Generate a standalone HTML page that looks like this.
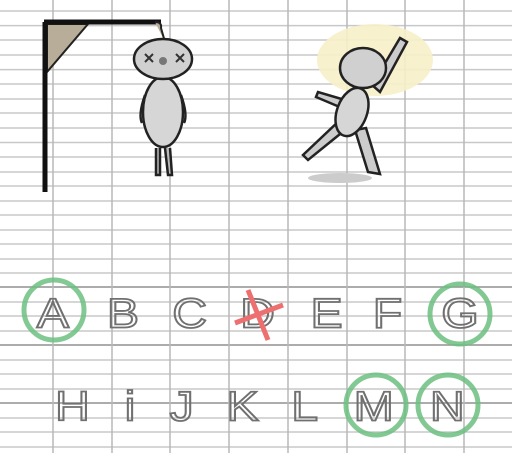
<!DOCTYPE html>
<html><head><style>
html,body{margin:0;padding:0;background:#fff;width:512px;height:453px;overflow:hidden}
svg{display:block}
text{font-family:"Liberation Sans",sans-serif;font-size:42px;fill:none;stroke:#707070;stroke-width:1.8;text-anchor:middle;dominant-baseline:central}
</style></head><body>
<svg width="512" height="453" viewBox="0 0 512 453">
<g stroke="#c8c8c8" stroke-width="1.5">
<line x1="0" y1="11" x2="512" y2="11"/><line x1="0" y1="25.6" x2="512" y2="25.6"/><line x1="0" y1="40" x2="512" y2="40"/><line x1="0" y1="55" x2="512" y2="55"/><line x1="0" y1="69.6" x2="512" y2="69.6"/><line x1="0" y1="84" x2="512" y2="84"/><line x1="0" y1="99" x2="512" y2="99"/><line x1="0" y1="113" x2="512" y2="113"/><line x1="0" y1="128" x2="512" y2="128"/><line x1="0" y1="142.5" x2="512" y2="142.5"/><line x1="0" y1="157" x2="512" y2="157"/><line x1="0" y1="172" x2="512" y2="172"/><line x1="0" y1="186" x2="512" y2="186"/><line x1="0" y1="201" x2="512" y2="201"/><line x1="0" y1="215" x2="512" y2="215"/><line x1="0" y1="230" x2="512" y2="230"/><line x1="0" y1="244" x2="512" y2="244"/><line x1="0" y1="259" x2="512" y2="259"/><line x1="0" y1="273" x2="512" y2="273"/><line x1="0" y1="287" x2="512" y2="287"/><line x1="0" y1="302" x2="512" y2="302"/><line x1="0" y1="316" x2="512" y2="316"/><line x1="0" y1="331" x2="512" y2="331"/><line x1="0" y1="345" x2="512" y2="345"/><line x1="0" y1="360" x2="512" y2="360"/><line x1="0" y1="374" x2="512" y2="374"/><line x1="0" y1="389" x2="512" y2="389"/><line x1="0" y1="403" x2="512" y2="403"/><line x1="0" y1="418" x2="512" y2="418"/><line x1="0" y1="432" x2="512" y2="432"/><line x1="0" y1="447" x2="512" y2="447"/>
</g>
<g stroke="#999" stroke-width="1.5"><line x1="0" y1="287" x2="512" y2="287"/><line x1="0" y1="345" x2="512" y2="345"/><line x1="0" y1="403" x2="512" y2="403"/></g>
<g stroke="#b8b8b8" stroke-width="1.5">
<line x1="53" y1="0" x2="53" y2="453"/><line x1="112" y1="0" x2="112" y2="453"/><line x1="170" y1="0" x2="170" y2="453"/><line x1="229" y1="0" x2="229" y2="453"/><line x1="288" y1="0" x2="288" y2="453"/><line x1="347" y1="0" x2="347" y2="453"/><line x1="405" y1="0" x2="405" y2="453"/><line x1="464" y1="0" x2="464" y2="453"/>
</g>
<polygon points="47,24 88,24 47,72" fill="#b8ad98" stroke="#222" stroke-width="2"/>
<path d="M45,22 L45,192 M44,22 L161,22" stroke="#111" stroke-width="5" fill="none"/>
<path d="M155,22 Q162,22 161,28 L165,42" stroke="#222" stroke-width="2" fill="#b8ad98"/>
<g stroke="#222" stroke-width="2.5" fill="#ccc">
<path d="M156,148 L156,175 L160,175 L160,148 M165,148 L168,175 L172,175 L170,148" fill="#bbb"/>
<path d="M145,95 Q138,115 142,123 M181,95 Q188,115 184,123" fill="none"/>
<ellipse cx="163" cy="112" rx="20" ry="35" fill="#d6d6d6"/>
<ellipse cx="163" cy="59" rx="29" ry="20" fill="#d0d0d0"/>
</g>
<g stroke="#333" stroke-width="2"><path d="M145,54 l8,8 m0,-8 l-8,8 M176,54 l8,8 m0,-8 l-8,8"/></g>
<circle cx="163" cy="61" r="4" fill="#777"/>
<ellipse cx="375" cy="60" rx="58" ry="36" fill="#f6f0c8" opacity=".9"/>
<ellipse cx="340" cy="178" rx="32" ry="5" fill="#ccc"/>
<g stroke="#222" stroke-width="2.5" fill="#ccc">
<path d="M340,120 L303,155 L308,160 L345,130 Z M355,130 L368,172 L380,174 L366,128 Z"/>
<path d="M345,100 L318,92 L316,97 L342,108 Z M372,85 L400,38 L407,42 L380,92 Z"/>
<ellipse cx="352" cy="112" rx="15" ry="25" fill="#d6d6d6" transform="rotate(20 352 112)"/>
<ellipse cx="363" cy="68" rx="23" ry="20" fill="#d0d0d0"/>
</g>
<g transform="scale(1.15,1)">
<text x="46" y="313">A</text><text x="107" y="313">B</text><text x="165" y="313">C</text><text x="224" y="313">D</text><text x="284" y="313">E</text><text x="337" y="313">F</text><text x="400" y="313">G</text>
<text x="63" y="406">H</text><text x="113" y="406">i</text><text x="158" y="406">J</text><text x="211" y="406">K</text><text x="265" y="406">L</text><text x="325" y="406">M</text><text x="389" y="406">N</text>
</g>
<g fill="none" stroke="#6cbf80" stroke-width="5" opacity=".85">
<circle cx="54" cy="310" r="30"/><circle cx="460" cy="314" r="30"/><circle cx="376" cy="405" r="30"/><circle cx="448" cy="405" r="30"/>
</g>
<path d="M235,323 L283,305 M248,290 L268,340" stroke="#ee6f70" stroke-width="5" fill="none"/>
</svg>
</body></html>
